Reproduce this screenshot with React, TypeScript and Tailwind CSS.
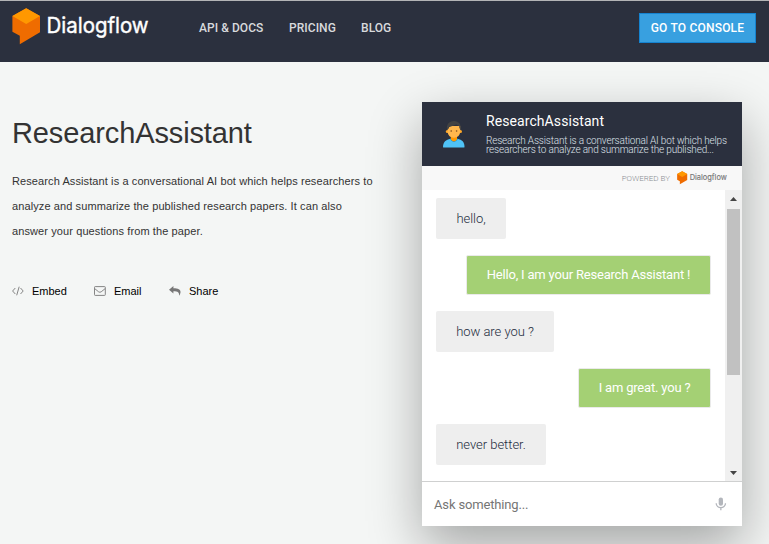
import React from "react";

const arial = "font-['Liberation_Sans',Arial,sans-serif]";
const roboto = "font-[Roboto,sans-serif]";

function Wordmark({ className, fill }: { className: string; fill: string }) {
  return (
    <svg className={`overflow-visible ${className}`} viewBox="0 0 137 38">
      <path d="M14.2 0.3 L28 8 V24.2 L7.8 36.3 V27.8 L0.4 23.8 V8 Z" fill="#ef6c00" />
      <path d="M14.2 0.3 L28 8 L14.2 16 L0.4 8 Z" fill="#ff9800" />
      <text
        x="34.6"
        y="24.6"
        fontFamily="Inter, sans-serif"
        fontSize="21.8"
        fontWeight={400}
        fill={fill}
        stroke={fill}
        strokeWidth="0.4"
        textLength="102"
        lengthAdjust="spacingAndGlyphs"
      >
        Dialogflow
      </text>
    </svg>
  );
}

function Avatar() {
  return (
    <svg className="h-[28px] w-[24px] shrink-0" viewBox="0 0 24 28">
      <path d="M1 27 C1 22 4 19.5 8.5 18.7 H15.5 C20 19.5 22.5 22 22.5 27 Q22.5 27.6 21.5 27.6 H2 Q1 27.6 1 27 Z" fill="#4fc3f7" />
      <path d="M8 18.8 Q11.8 25.4 16 18.8 Z" fill="#0288d1" />
      <path d="M8.8 15 H15 V19.4 Q11.9 23.6 8.8 19.4 Z" fill="#ff9800" />
      <circle cx="5.3" cy="11.4" r="1.5" fill="#ffa726" />
      <circle cx="18.5" cy="11.4" r="1.5" fill="#ffa726" />
      <path d="M5.6 6 H18.2 V11.5 Q18 17.4 11.9 17.8 Q5.8 17.4 5.6 11.5 Z" fill="#ffb74d" />
      <path d="M5 9.8 C4.5 4 7 1.4 12 1 C17 1.4 19.2 4 18.7 9.8 L17.3 8 V6.3 L14.3 4.6 L7 7.2 V8.2 Z" fill="#424242" />
      <circle cx="9.2" cy="11" r="0.8" fill="#784719" />
      <circle cx="14.6" cy="11" r="0.8" fill="#784719" />
    </svg>
  );
}

function Bot({ children, width }: { children: string; width: string }) {
  return (
    <div className={`flex h-[41px] ${width} items-center justify-center self-start rounded-[2px] bg-[#eee] text-[13px] font-light tracking-[-0.04px] text-[#222b3c]`}>
      {children}
    </div>
  );
}

function User({ children, width }: { children: string; width: string }) {
  return (
    <div className={`flex h-10 ${width} items-center justify-center self-end rounded-[2px] border border-[#eaeaea] bg-[#a4d074] pb-px text-[13px] tracking-[-0.19px] text-white`}>
      {children}
    </div>
  );
}

function ChatPanel() {
  return (
    <section className={`mt-10 flex h-[424px] w-[320px] shrink-0 flex-col bg-white shadow-[0_20px_50px_0_rgba(0,0,0,0.33)] ${roboto}`}>
      <div className="flex h-16 shrink-0 bg-[#2b303e] pl-5 pt-[11px]">
        <div className="pt-[7px]">
          <Avatar />
        </div>
        <div className="ml-5">
          <div className="h-[19px] whitespace-nowrap text-[14px] leading-[17px] tracking-[0.08px] text-white">ResearchAssistant</div>
          <div className="mt-1 whitespace-nowrap text-[10px] font-light leading-[9px] tracking-[-0.18px] text-[#dfe2ea]">
            Research Assistant is a conversational AI bot which helps
            <br />
            researchers to analyze and summarize the published...
          </div>
        </div>
      </div>
      <div className="flex h-6 shrink-0 items-center justify-end bg-[#f8f8f8] pr-[15px]">
        <span className="mr-[7px] pt-0.5 text-[8px] font-light leading-none text-[#8b8e93]">POWERED BY</span>
        <Wordmark className="h-[14px] w-[50px]" fill="#777" />
      </div>
      <div className="flex h-[291px] shrink-0">
        <div className="flex w-[303px] flex-col gap-4 px-[14px] pt-2">
          <Bot width="w-[70px]">hello,</Bot>
          <User width="w-[245px]">Hello, I am your Research Assistant !</User>
          <Bot width="w-[118px]">how are you ?</Bot>
          <User width="w-[133px]">I am great. you ?</User>
          <Bot width="w-[110px]">never better.</Bot>
        </div>
        <div className="flex w-[17px] flex-col items-center bg-[#f0f0f0]">
          <svg className="h-[19px] w-[17px] shrink-0" viewBox="0 0 17 19">
            <path d="M5 11 L8.5 7 L12 11 Z" fill="#444" />
          </svg>
          <div className="h-[166px] w-[13px] bg-[#c1c1c1]" />
          <svg className="mt-auto h-[17px] w-[17px] shrink-0" viewBox="0 0 17 17">
            <path d="M5 7 L8.5 11 L12 7 Z" fill="#444" />
          </svg>
        </div>
      </div>
      <div className="flex flex-1 items-center justify-between border-t border-[#cfd0d0] pl-3 pr-[15px]">
        <span className="pt-0.5 text-[13px] tracking-[-0.15px] text-[#757575]">Ask something...</span>
        <svg className="h-[14px] w-[12px]" viewBox="0 0 12 14">
          <rect x="3.7" y="0.4" width="4.3" height="8.4" rx="2.1" fill="#b3b6bc" />
          <path d="M1.2 6.2 C1.2 12 10.5 12 10.5 6.2 M5.85 10.6 V13.3" fill="none" stroke="#b3b6bc" strokeWidth="1.3" />
        </svg>
      </div>
    </section>
  );
}

export default function App() {
  return (
    <div className={`h-[544px] w-[769px] overflow-hidden bg-[#f4f6f5] ${arial}`}>
      <header className="flex h-[62px] items-start border-t border-[#b3b4b6] bg-[#2b303e] pl-[12px]">
        <Wordmark className="mt-[7px] h-[38px] w-[137px]" fill="#fff" />
        <nav className={`ml-[50px] mt-[19px] flex text-[12px] font-medium leading-4 tracking-[0.05px] text-[#d8dadd] ${roboto}`}>
          <span className="w-[90px]">API &amp; DOCS</span>
          <span className="w-[72px]">PRICING</span>
          <span>BLOG</span>
        </nav>
        <div className={`ml-auto mr-[13px] mt-3 flex h-[30px] w-[117px] items-center justify-center border border-[#1583d0] bg-[#38a0e0] text-[12px] font-medium tracking-[0.2px] text-white ${roboto}`}>
          GO TO CONSOLE
        </div>
      </header>
      <main className="flex">
        <div className="w-[410px] shrink-0 pl-3 pt-[54px]">
          <h1 className="h-[34px] text-[29px] leading-[34px] tracking-[-0.12px] text-[#333]">ResearchAssistant</h1>
          <p className="mt-[19px] whitespace-nowrap text-[11px] leading-[25px] tracking-[0.1px] text-[#333]">
            Research Assistant is a conversational AI bot which helps researchers to
            <br />
            analyze and summarize the published research papers. It can also
            <br />
            answer your questions from the paper.
          </p>
          <div className="mt-[39px] flex h-4 items-center text-[11px] text-black">
            <div className="flex w-[82px] items-center">
              <svg className="mr-2 h-[10px] w-[12px]" viewBox="0 0 12 10" fill="none" stroke="#858585" strokeWidth="1">
                <path d="M3.3 2 L0.6 5 L3.3 8 M8.5 2 L11.2 5 L8.5 8 M7.2 0.7 L4.7 9.3" />
              </svg>
              Embed
            </div>
            <div className="flex w-[75px] items-center">
              <svg className="mr-2 h-[10px] w-[12px]" viewBox="0 0 12 10" fill="none" stroke="#858585" strokeWidth="1">
                <rect x="0.5" y="0.6" width="10.8" height="8.8" rx="0.7" />
                <path d="M0.7 2.6 L4.6 5.8 Q5.9 6.7 7.2 5.8 L11.2 2.6" />
              </svg>
              Email
            </div>
            <div className="flex items-center">
              <svg className="mr-2 h-[10px] w-[12px]" viewBox="0 0 12 10">
                <path d="M0 3.7 L4.4 0 V2.2 C9 2.2 11.8 3.2 11.5 6.4 Q11.3 8.2 10 9.7 C10.5 6.5 9 5.2 4.4 5.2 V7.4 Z" fill="#777" />
              </svg>
              Share
            </div>
          </div>
        </div>
        <div className="ml-3">
          <ChatPanel />
        </div>
      </main>
    </div>
  );
}
